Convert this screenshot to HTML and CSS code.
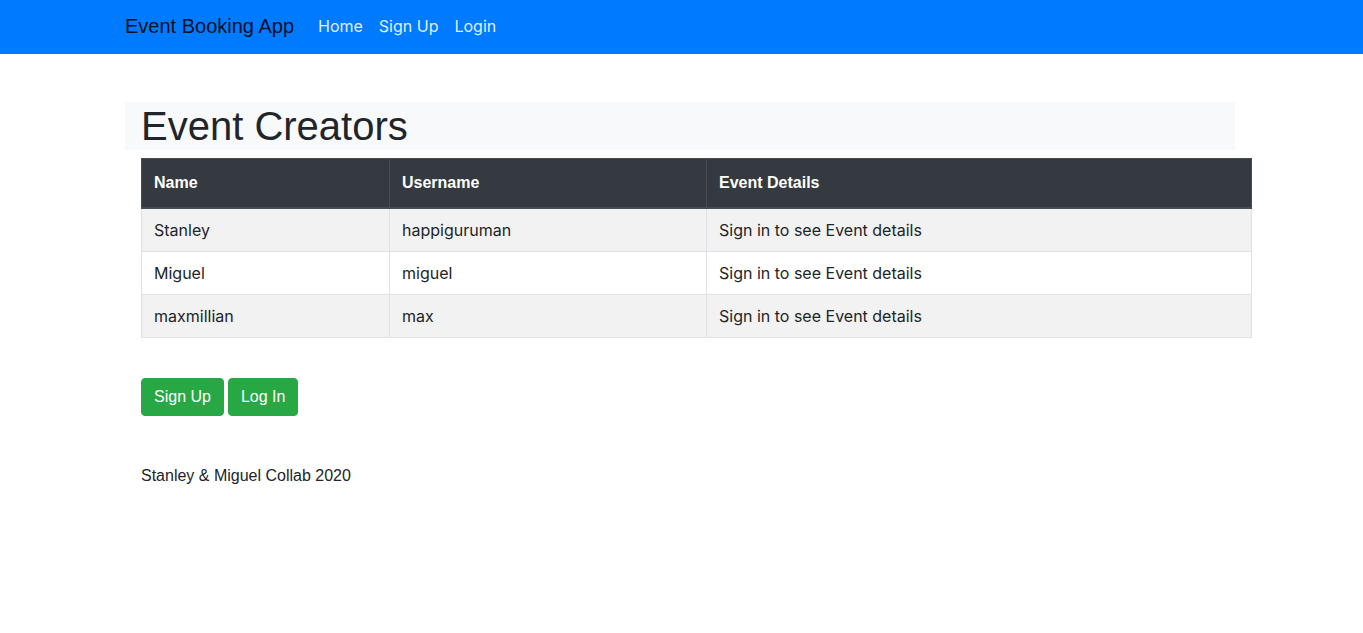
FILE: index.html
```html
<!DOCTYPE html>
<html lang="en">
<head>
<meta charset="utf-8">
<title>Event Booking App</title>
<link rel="stylesheet" href="styles.css">
</head>
<body>
<nav class="navbar">
  <div class="nav-inner">
    <a class="brand" href="#">Event Booking App</a>
    <a class="nav-link" href="#">Home</a>
    <a class="nav-link" href="#">Sign Up</a>
    <a class="nav-link" href="#">Login</a>
  </div>
</nav>
<main class="container">
  <div class="jumbo"><h1 class="title">Event Creators</h1></div>
  <section class="content">
    <table class="table">
      <thead>
        <tr><th class="c1">Name</th><th class="c2">Username</th><th class="c3">Event Details</th></tr>
      </thead>
      <tbody>
        <tr class="odd"><td>Stanley</td><td>happiguruman</td><td>Sign in to see Event details</td></tr>
        <tr><td>Miguel</td><td>miguel</td><td>Sign in to see Event details</td></tr>
        <tr class="odd"><td>maxmillian</td><td>max</td><td>Sign in to see Event details</td></tr>
      </tbody>
    </table>
    <div class="actions">
      <a class="btn" href="#">Sign Up</a>
      <a class="btn" href="#">Log In</a>
    </div>
    <p class="footer">Stanley &amp; Miguel Collab 2020</p>
  </section>
</main>
</body>
</html>
```

FILE: styles.css
```css
* { box-sizing: border-box; }
body {
  margin: 0;
  font-family: "Liberation Sans", Arial, sans-serif;
  font-size: 16px;
  line-height: 24px;
  color: #212529;
  background: #fff;
}
a { text-decoration: none; }
.navbar {
  background: #007bff;
  height: 54px;
}
.nav-inner {
  margin-left: 125px;
  height: 54px;
  padding-bottom: 2px;
  display: flex;
  align-items: center;
}
.brand {
  font-size: 20px;
  line-height: 30px;
  color: rgba(0, 0, 0, 0.9);
  margin-right: 16px;
}
.nav-link {
  padding: 0 8px;
  font-family: Inter, "Liberation Sans", sans-serif;
  color: rgba(255, 255, 255, 0.9);
  line-height: 24px;
}
.container {
  width: 1110px;
  margin: 48px 0 0 125px;
}
.jumbo {
  background: #f8f9fa;
  height: 48px;
  padding: 0 16px;
}
.title {
  margin: 0;
  font-size: 40px;
  line-height: 48px;
  font-weight: 400;
}
.content {
  margin-left: 16px;
  width: 1110px;
}
.table {
  margin-top: 8px;
  width: 1110px;
  border-collapse: collapse;
  table-layout: fixed;
}
.c1 { width: 248px; }
.c2 { width: 317px; }
.c3 { width: 545px; }
.table th {
  background: #343a40;
  color: #fff;
  font-weight: 700;
  text-align: left;
  padding: 12px;
  line-height: 24px;
  border: 1px solid #454d55;
  border-bottom-width: 2px;
}
.table td {
  font-family: Inter, "Liberation Sans", sans-serif;
  font-size: 16px;
  line-height: 18px;
  padding: 12px;
  border: 1px solid #dee2e6;
  color: #212529;
}
.table tr.odd td { background: #f2f2f2; }
.actions {
  margin-top: 40px;
  display: flex;
  gap: 4px;
}
.btn {
  display: inline-block;
  background: #28a745;
  color: #fff;
  border: 1px solid #28a745;
  border-radius: 4px;
  padding: 6px 12px;
  line-height: 24px;
  font-size: 16px;
}
.footer {
  margin: 48px 0 0;
}
```
